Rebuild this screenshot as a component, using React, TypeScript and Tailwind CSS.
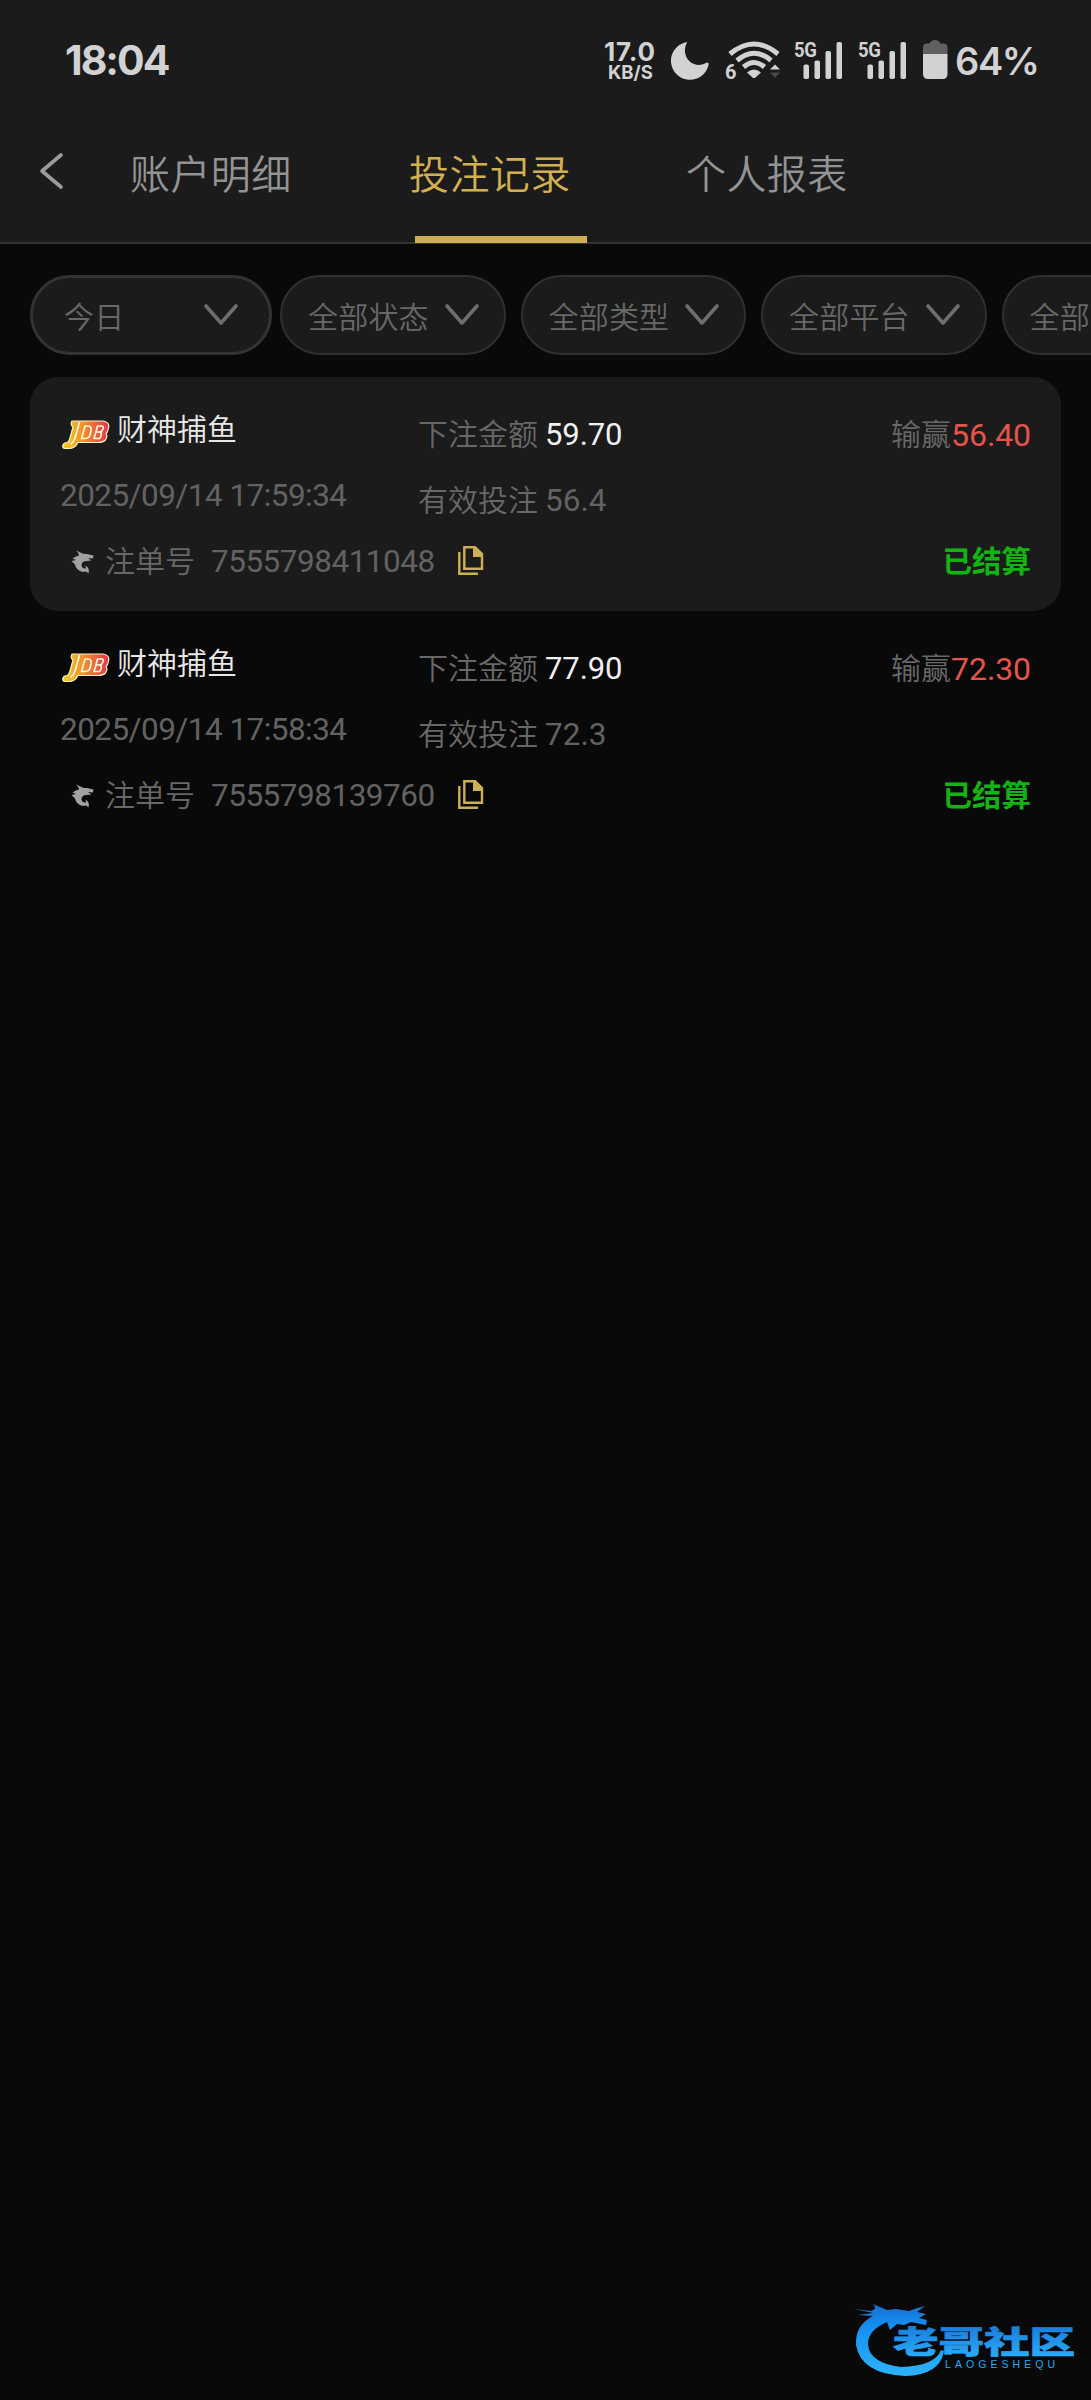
import React from "react";

function Moon() {
  return (
    <svg className="absolute left-[670px] top-[42px]" width="39" height="38" viewBox="0 0 39 38">
      <path d="M17 0.5C13 8 15 16 21 20.500C26 24 32 23.500 37 20.500Q39 20 38.500 23A19 19 0 1 1 15 0.500Q17 -0.300 17 0.500Z" fill="#d2d2d2" />
    </svg>
  );
}

function Wifi() {
  return (
    <svg className="absolute left-[725px] top-[40px]" width="58" height="42" viewBox="0 0 58 42">
      <g fill="none" stroke="#d2d2d2" strokeWidth="5">
        <path d="M5 14Q29 -6 53 14" />
        <path d="M12 20.500Q29 6 46 20.500" />
        <path d="M18.500 27Q29 18 39.500 27" />
      </g>
      <path d="M22 32.500Q29 26.500 36 32.500L30.500 37.500Q29 38.500 27.500 37.500Z" fill="#d2d2d2" />
      <path d="M50 24.500l5 5h-10z" fill="#d2d2d2" />
      <path d="M45 32.500h10l-5 5z" fill="#4a4a4a" />
    </svg>
  );
}

function Signal() {
  return (
    <div className="relative h-10 w-[50px]">
      <span className="absolute left-0 top-0 origin-left scale-x-[0.880] text-[21px] leading-[20px] font-bold tracking-[-0.500px] font-['Roboto',sans-serif]">5G</span>
      <svg className="absolute left-0 top-0" width="50" height="40" viewBox="0 0 50 40" fill="#d2d2d2">
        <rect x="9.500" y="24.500" width="5.500" height="14.500" rx="1.800" />
        <rect x="20.500" y="20.500" width="5.500" height="18.500" rx="1.800" />
        <rect x="31.500" y="11" width="5.500" height="28" rx="1.800" />
        <rect x="42.500" y="2" width="5.500" height="37" rx="1.800" />
      </svg>
    </div>
  );
}

function StatusBar() {
  return (
    <div className="relative h-[110px] text-[#d2d2d2]">
      <span className="absolute left-[65px] top-[36px] text-[41px] leading-[48px] font-bold tracking-[-2px] font-['Inter',sans-serif]">18:04</span>
      <span className="absolute left-[604px] top-[41px] text-[26px] leading-[21px] font-bold tracking-[0.800px] font-['Inter',sans-serif]">17.0</span>
      <span className="absolute left-[608px] top-[63px] text-[18.500px] leading-[18px] font-bold font-['Inter',sans-serif]">KB/S</span>
      <Moon />
      <Wifi />
      <span className="absolute left-[725px] top-[62px] text-[20px] leading-[20px] font-bold font-['Roboto',sans-serif]">6</span>
      <div className="absolute left-[794px] top-[40px] flex gap-[14px]">
        <Signal />
        <Signal />
      </div>
      <svg className="absolute left-[923px] top-[40px]" width="25" height="39" viewBox="0 0 25 39">
        <path d="M0 14V7.500Q0 3.500 4 3.500H6.500Q8 0 12 0T17.500 3.500H20.500Q24.500 3.500 24.500 7.500V14Z" fill="#606060" />
        <path d="M0 14H24.500V34Q24.500 39 19.500 39H5Q0 39 0 34Z" fill="#d2d2d2" />
      </svg>
      <span className="absolute left-[955px] top-[37px] text-[38px] leading-[48px] font-semibold tracking-[-1.400px] font-['Inter',sans-serif]">64%</span>
    </div>
  );
}

function Tabs() {
  return (
    <div className="flex h-[134px] border-b-2 border-[#333333] text-[40px] leading-[131px] font-[350] tracking-[0.4px] text-[#939393]">
      <svg className="ml-[38px] mt-[42px] shrink-0" width="28" height="40" viewBox="0 0 28 40" fill="none" stroke="#9b9b9b" strokeWidth="3.600" strokeLinecap="round" strokeLinejoin="round">
        <path d="M23 3L4 19L23 35" />
      </svg>
      <span className="ml-[64px] w-[279px]">账户明细</span>
      <span className="relative w-[277px] text-[#d3b04f]">
        投注记录
        <i className="absolute left-[6px] top-[126px] h-[7px] w-[172px] bg-[#cdb056]" />
      </span>
      <span>个人报表</span>
    </div>
  );
}

function Chevron() {
  return (
    <svg className="shrink-0" width="36" height="24" viewBox="0 0 36 24" fill="none" stroke="#6e6e6e" strokeWidth="3.600" strokeLinecap="round" strokeLinejoin="round">
      <path d="M3 3L18 20L33 3" />
    </svg>
  );
}

function Filters() {
  return (
    <div className="flex h-[80px] w-[1091px] overflow-hidden pl-[30px] text-[30px] font-[350] tracking-[0.2px] text-[#686868]">
      <div className="flex w-[242px] shrink-0 items-center justify-between rounded-full border-[3px] border-[#333333] bg-[#1b1b1b] pl-[31px] pr-[30px]">
        <span className="mt-[4px]">今日</span>
        <Chevron />
      </div>
      <div className="ml-[8px] flex shrink-0 gap-[15px]">
        {["全部状态", "全部类型", "全部平台", "全部游戏"].map((label) => (
          <div key={label} className="flex w-[225.500px] shrink-0 items-center justify-between rounded-full border-2 border-[#303030] bg-[#1b1b1b] pl-[26px] pr-[24px]">
            <span className="mt-[4px]">{label}</span>
            <Chevron />
          </div>
        ))}
      </div>
    </div>
  );
}

function JdbLogo({ id }: { id: string }) {
  return (
    <svg className="shrink-0" width="48" height="30" viewBox="0 0 48 30">
      <defs>
        <linearGradient id={id} x1="0" x2="1">
          <stop offset="0" stopColor="#f2cf1d" />
          <stop offset="0.450" stopColor="#f2902c" />
          <stop offset="1" stopColor="#e2364c" />
        </linearGradient>
      </defs>
      <path d="M10 1H41Q48 2 46.500 8Q46 12 44 13.500Q46 16 43.500 20Q41 22.500 36 22.500H16Q13 28.500 7 28.500H3Q0 28 1 25Q2 22.500 5 22.500Q7 22 8 18L11 7Q8 5 10 1Z" fill={`url(#${id})`} stroke="#fff3c4" strokeWidth="1.200" />
      <g fill="none" stroke="#fff7e0" strokeWidth="1.700" strokeLinejoin="round">
        <path d="M17.500 2L13 18Q11.500 22.500 8.500 24.500" />
        <path d="M23 6H26Q30 6 29 11L28 15Q27 18.500 23 18.500H19.500Z" />
        <path d="M35.500 6H40Q42 6.500 41 9T38 12H34L35.500 6ZM34 12H38Q40 13 39 16T36 18.500H32Z" />
      </g>
    </svg>
  );
}

function Shark() {
  return (
    <svg className="shrink-0" width="24" height="24" viewBox="0 0 24 24" fill="#a2a2a2">
      <path d="M5 0.500L11.500 3.500Q14 4 16 4L22.500 5.500L22 8.500L17 8L20.500 10.500Q15 11 12.500 11.500Q9.500 14 11 17Q12.500 19 15 18.500L14.500 15.500Q19 18 17.500 23.500Q15.500 20.500 12 22Q5 20.500 4 14.500L0.500 11L5 10L1.500 8.500Q5 6 8 5.500Q7.500 2.500 5 0.500Z" />
    </svg>
  );
}

function CopyIcon() {
  return (
    <svg className="shrink-0" width="26" height="30" viewBox="0 0 26 30" fill="none" stroke="#cdb056" strokeWidth="2.400">
      <path d="M1.300 6V27.800H20" />
      <path d="M6.300 1.300H17L24 8V22.800H6.300Z" />
      <path d="M15 1V11H24.500V8L17.500 1Z" fill="#cdb056" stroke="none" />
    </svg>
  );
}

interface Bet {
  time: string;
  order: string;
  amount: string;
  valid: string;
  result: string;
}

const bets: Bet[] = [
  { time: "2025/09/14 17:59:34", order: "7555798411048", amount: "59.70", valid: "56.4", result: "56.40" },
  { time: "2025/09/14 17:58:34", order: "7555798139760", amount: "77.90", valid: "72.3", result: "72.30" },
];

function BetCard({ bet, filled }: { bet: Bet; filled: boolean }) {
  return (
    <div className={`h-[233.500px] rounded-[28px] pl-[30px] pr-[30px] pt-[33px] text-[30px] font-[350] text-[#686868] ${filled ? "bg-[#1b1b1b]" : ""}`}>
      <div className="flex h-[132px]">
        <div className="w-[358px]">
          <div className="flex h-[40px] items-center text-[#e8e8e8]">
            <span className="ml-[2px] mt-[9px]">
              <JdbLogo id={`jdb-${bet.order}`} />
            </span>
            <span className="ml-[7px] leading-[40px]">财神捕鱼</span>
          </div>
          <div className="mt-[26px] text-[31.500px] leading-[40px] font-normal text-[#626262] tracking-[-0.550px] whitespace-nowrap">{bet.time}</div>
        </div>
        <div className="mt-[5px] flex-1 whitespace-nowrap">
          <div className="flex h-[40px] items-center leading-[40px]">
            <span>下注金额</span>
            <span className="ml-[7px] text-[31px] font-normal tracking-[-0.100px] text-[#f0f0f0]">{bet.amount}</span>
          </div>
          <div className="mt-[26px] flex h-[40px] items-center leading-[40px]">
            <span>有效投注</span>
            <span className="ml-[7px] text-[31.500px] font-normal text-[#626262]">{bet.valid}</span>
          </div>
        </div>
        <div className="mt-[5px] flex h-[40px] items-center leading-[40px]">
          <span>输赢</span>
          <span className="text-[32px] font-normal tracking-[-0.100px] text-[#e5544a]">{bet.result}</span>
        </div>
      </div>
      <div className="flex h-[40px] items-center leading-[40px]">
        <span className="ml-[11px]">
          <Shark />
        </span>
        <span className="ml-[10px]">注单号</span>
        <span className="ml-[16px] w-[226px] text-[31.500px] font-normal text-[#626262] tracking-[-0.500px]">{bet.order}</span>
        <span className="ml-[21px] -mt-[2px]">
          <CopyIcon />
        </span>
        <span className="ml-auto text-[29.500px] font-bold text-[#13b313]">已结算</span>
      </div>
    </div>
  );
}

function Watermark() {
  return (
    <svg className="absolute bottom-[20px] right-[14px]" width="226" height="86" viewBox="850 2294 226 86">
      <defs>
        <linearGradient id="wm" gradientUnits="userSpaceOnUse" x1="0" y1="2305" x2="0" y2="2375">
          <stop offset="0" stopColor="#1670d2" />
          <stop offset="0.300" stopColor="#168ff2" />
          <stop offset="1" stopColor="#2cb2fb" />
        </linearGradient>
        <linearGradient id="wm-text" x1="0" y1="0" x2="0" y2="1">
          <stop offset="0.200" stopColor="#1a7ddd" />
          <stop offset="1" stopColor="#2cb2fb" />
        </linearGradient>
      </defs>
      <g fill="url(#wm)">
        <path d="M853 2309L870 2311Q877 2309 872 2304L886 2310L895 2309L908 2311Q915 2308 924 2306L916 2312L925 2314L918 2318L926 2320L925 2325L910 2322L903 2325L896 2324L889 2330L886 2322Q867 2330 867 2344Q868 2363 900 2367Q934 2366 940 2350L943 2351Q939 2375 904 2376Q860 2374 855 2345Q854 2325 872 2316L857 2315L872 2313Z" />
        <text transform="translate(892 2353) scale(1 0.680)" fontSize="45.500" fontWeight="900" fill="url(#wm-text)" stroke="url(#wm-text)" strokeWidth="1" fontFamily="'Noto Sans CJK SC', sans-serif">老哥社区</text>
        <text x="944" y="2368" fontSize="10.500" textLength="110" fontFamily="'Liberation Sans', sans-serif">LAOGESHEQU</text>
      </g>
    </svg>
  );
}

export default function App() {
  return (
    <div className="relative h-[2400px] w-[1091px] overflow-hidden bg-[#090909] font-['Roboto','Noto_Sans_CJK_SC',sans-serif]">
      <header className="bg-[#1b1b1b]">
        <StatusBar />
        <Tabs />
      </header>
      <main className="pt-[31px]">
        <Filters />
        <div className="mx-[30px] mt-[22px]">
          {bets.map((bet, i) => (
            <BetCard key={bet.order} bet={bet} filled={i % 2 === 0} />
          ))}
        </div>
      </main>
      <Watermark />
    </div>
  );
}
